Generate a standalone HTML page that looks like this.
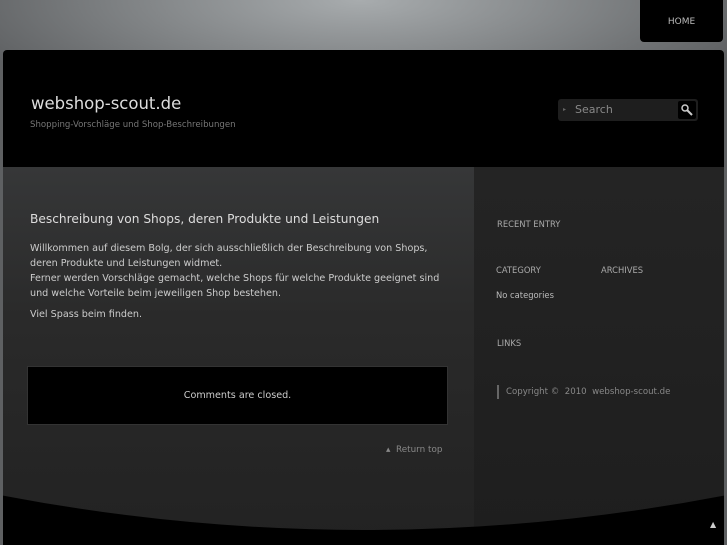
<!DOCTYPE html>
<html><head><meta charset="utf-8"><style>
*{margin:0;padding:0;box-sizing:border-box}
html,body{overflow:hidden}
body{width:727px;height:545px;position:relative;font-family:"DejaVu Sans","Liberation Sans",sans-serif;background:radial-gradient(ellipse 420px 120px at 360px 0px,#a8acae,#7c7f81 60%,#5e6062);}
.nav{position:absolute;left:640px;top:0;width:83px;height:42px;background:#000;border-radius:0 0 4px 4px;color:#bbb;font-size:9px;text-align:center;line-height:44px}
.panel{position:absolute;left:3px;top:50px;width:721px;height:495px;background:#000;border-radius:4px 4px 0 0;overflow:hidden}
.content{position:absolute;left:0;top:117px;width:471px;height:378px;background:linear-gradient(#363738,#2a2a2a 40%,#222)}
.side{position:absolute;left:471px;top:117px;width:250px;height:378px;background:linear-gradient(#242424,#1e1e1e)}
h1{position:absolute;left:28px;top:44px;font-size:16.5px;font-weight:normal;color:#ddd}
.tag{position:absolute;left:27px;top:70px;font-size:8.6px;color:#777}
.search{position:absolute;left:555px;top:49px;width:140px;height:22px;background:#1e1e1e;border-radius:3px;color:#888;font-size:11px;line-height:22px;padding-left:17px}
.search b{position:absolute;right:2px;top:2px;width:18px;height:18px;background:#000;border-radius:2px}
.t{position:absolute;color:#ccc}
</style></head><body>
<div class="nav">HOME</div>
<div class="panel">
<div class="content"></div><div class="side"></div>
<svg style="position:absolute;left:-3px;top:0" width="727" height="495"><path d="M0,445 Q364,515 727,445 L727,495 L0,495 Z" fill="#000"/></svg>
<h1>webshop-scout.de</h1>
<div class="tag">Shopping-Vorschläge und Shop-Beschreibungen</div>
<div class="search"><span style="position:absolute;left:5px;font-size:6px;color:#666">▸</span>Search<b><svg width="18" height="18"><circle cx="7" cy="7" r="3" stroke="#ccc" stroke-width="1.5" fill="none"/><path d="M9 9l5 5" stroke="#ccc" stroke-width="2"/></svg></b></div>
<div class="t" style="left:27px;top:162px;font-size:12.2px;color:#ddd">Beschreibung von Shops, deren Produkte und Leistungen</div>
<div class="t" style="left:27px;top:191px;font-size:9.6px;line-height:15px;width:425px">Willkommen auf diesem Bolg, der sich ausschließlich der Beschreibung von Shops, deren Produkte und Leistungen widmet.<br>Ferner werden Vorschläge gemacht, welche Shops für welche Produkte geeignet sind und welche Vorteile beim jeweiligen Shop bestehen.</div>
<div class="t" style="left:27px;top:259px;font-size:9.6px">Viel Spass beim finden.</div>
<div style="position:absolute;left:24px;top:316px;width:421px;height:59px;background:#000;border:1px solid #333;color:#ccc;font-size:9.6px;text-align:center;line-height:57px">Comments are closed.</div>
<div class="t" style="left:383px;top:395px;font-size:8.8px;color:#888">▴ &nbsp;Return top</div>
<div class="t" style="left:494px;top:169px;font-size:8.4px;color:#aaa">RECENT ENTRY</div>
<div class="t" style="left:493px;top:215px;font-size:8.4px;color:#aaa">CATEGORY</div>
<div class="t" style="left:598px;top:215px;font-size:8.4px;color:#aaa">ARCHIVES</div>
<div class="t" style="left:493px;top:240px;font-size:8.4px;color:#bbb">No categories</div>
<div class="t" style="left:494px;top:288px;font-size:8.4px;color:#aaa">LINKS</div>
<div class="t" style="left:494px;top:335px;font-size:8.6px;color:#888;border-left:2px solid #666;padding-left:7px;line-height:14px">Copyright © &nbsp;2010 &nbsp;webshop-scout.de</div>
<div class="t" style="left:707px;top:470px;font-size:8px;color:#ccc">▲</div>
</div>
</body></html>
